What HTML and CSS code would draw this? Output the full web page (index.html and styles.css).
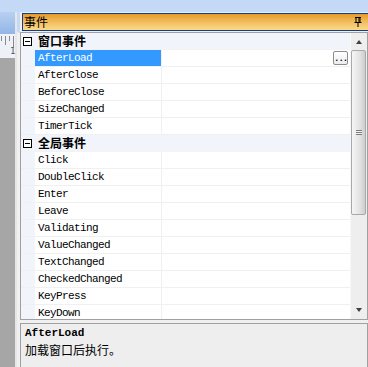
FILE: index.html
```html
<!DOCTYPE html>
<html>
<head>
<meta charset="utf-8">
<link rel="stylesheet" href="styles.css">
</head>
<body>
<div class="screen">
  <div class="topband"></div>
  <div class="main">
    <div class="editor">
      <div class="ed-col">
        <div class="ed-head"></div>
        <div class="ruler">
          <div class="ticks">
            <span class="t1"></span><span class="t2"></span><span class="t1"></span><span class="t3"></span>
          </div>
          <span class="num">1</span>
        </div>
        <div class="ed-body"></div>
      </div>
      <div class="ed-edge"></div>
      <div class="ed-gap"></div>
    </div>
    <div class="panel">
      <div class="titlebar">
        <span class="title">事件</span>
        <svg class="pin" width="8" height="10" viewBox="0 0 8 10">
          <path d="M1 0.5H7M2 0.5V5.5M5 0.5V5.5M6 0.5V5.5M0.5 5.5H7.5M4 5.5V10" stroke="#000" stroke-width="1" fill="none"/>
        </svg>
      </div>
      <div class="grid">
        <div class="rows">
          <div class="cat"><span class="toggle"></span><span class="cat-name">窗口事件</span></div>
          <div class="row sel"><span class="gut"></span><span class="name">AfterLoad</span><span class="val"><span class="dots">...</span></span></div>
          <div class="row"><span class="gut"></span><span class="name">AfterClose</span><span class="val"></span></div>
          <div class="row"><span class="gut"></span><span class="name">BeforeClose</span><span class="val"></span></div>
          <div class="row"><span class="gut"></span><span class="name">SizeChanged</span><span class="val"></span></div>
          <div class="row"><span class="gut"></span><span class="name">TimerTick</span><span class="val"></span></div>
          <div class="cat"><span class="toggle"></span><span class="cat-name">全局事件</span></div>
          <div class="row"><span class="gut"></span><span class="name">Click</span><span class="val"></span></div>
          <div class="row"><span class="gut"></span><span class="name">DoubleClick</span><span class="val"></span></div>
          <div class="row"><span class="gut"></span><span class="name">Enter</span><span class="val"></span></div>
          <div class="row"><span class="gut"></span><span class="name">Leave</span><span class="val"></span></div>
          <div class="row"><span class="gut"></span><span class="name">Validating</span><span class="val"></span></div>
          <div class="row"><span class="gut"></span><span class="name">ValueChanged</span><span class="val"></span></div>
          <div class="row"><span class="gut"></span><span class="name">TextChanged</span><span class="val"></span></div>
          <div class="row"><span class="gut"></span><span class="name">CheckedChanged</span><span class="val"></span></div>
          <div class="row"><span class="gut"></span><span class="name">KeyPress</span><span class="val"></span></div>
          <div class="row"><span class="gut"></span><span class="name">KeyDown</span><span class="val"></span></div>
        </div>
        <div class="scrollbar">
          <div class="arrow up"></div>
          <div class="thumb"><span class="grip"></span></div>
          <div class="track"></div>
          <div class="arrow down"></div>
        </div>
      </div>
      <div class="desc">
        <div class="desc-title">AfterLoad</div>
        <div class="desc-text">加载窗口后执行。</div>
      </div>
    </div>
  </div>
</div>
</body>
</html>
```

FILE: styles.css
```css
html, body {
  margin: 0;
  padding: 0;
}
body {
  width: 368px;
  height: 367px;
  overflow: hidden;
  background: #f0f0f0;
}
.screen {
  width: 368px;
  height: 367px;
  display: flex;
  flex-direction: column;
}
.topband {
  height: 12px;
  background: #c4d9f6;
  flex: none;
}
.main {
  flex: 1;
  display: flex;
  min-height: 0;
}
.editor {
  width: 20px;
  flex: none;
  display: flex;
}
.ed-col {
  width: 15px;
  display: flex;
  flex-direction: column;
}
.ed-head {
  height: 22px;
  background: linear-gradient(#b8d0f1, #92b6e6);
}
.ruler {
  height: 24px;
  background: #eef2f8;
  position: relative;
}
.ticks {
  display: flex;
  gap: 3px;
  padding: 2px 0 0 1px;
  align-items: flex-start;
}
.ticks span {
  width: 1px;
  background: #8a8a8a;
}
.t1 { height: 5px; }
.t2 { height: 9px; }
.t3 { height: 12px; }
.num {
  position: absolute;
  left: 10px;
  top: 12px;
  font: 9px "DejaVu Sans Mono", monospace;
  color: #555;
}
.ed-body {
  flex: 1;
  background: #a6a6a6;
}
.ed-edge {
  width: 2px;
  background: #e6e6e6;
}
.ed-gap {
  width: 3px;
  background: linear-gradient(#c4d9f6 0, #c4d9f6 20px, #f0f0f0 21px);
}
.panel {
  flex: 1;
  display: flex;
  flex-direction: column;
  min-width: 0;
}
.titlebar {
  margin: 1px 0 0 2px;
  height: 16px;
  border: 1px solid #0b3c9e;
  border-right: none;
  background: linear-gradient(#e69a28, #f3c46a 60%, #fbd985);
  display: flex;
  align-items: center;
  justify-content: space-between;
  padding: 0 0 0 1px;
}
.title {
  font: 12px "Noto Sans CJK SC", sans-serif;
  color: #000;
  line-height: 16px;
}
.pin {
  margin-right: 6px;
  display: block;
}
.grid {
  margin-top: 1px;
  height: 286px;
  border: 1px solid #a0a0a0;
  display: flex;
  background: #fff;
  overflow: hidden;
}
.rows {
  flex: 1;
  display: flex;
  flex-direction: column;
  min-width: 0;
}
.cat {
  flex: none;
  height: 16px;
  border-bottom: 1px solid #f3f3f3;
  background: #f1f5fb;
  display: flex;
  align-items: center;
}
.toggle {
  width: 7px;
  height: 7px;
  border: 1px solid #000;
  margin: 0 6px 0 2px;
  position: relative;
  background: #fff;
}
.toggle::after {
  content: "";
  position: absolute;
  left: 1px;
  right: 1px;
  top: 3px;
  height: 1px;
  background: #000;
}
.cat-name {
  font: bold 12px "Noto Sans CJK SC", sans-serif;
  line-height: 16px;
  color: #000;
}
.row {
  flex: none;
  height: 16px;
  border-bottom: 1px solid #f0f0f0;
  display: flex;
}
.gut {
  width: 14px;
  flex: none;
  background: #f1f5fb;
}
.name {
  width: 123px;
  flex: none;
  padding-left: 3px;
  border-right: 1px solid #f0f0f0;
  font: 11px "Liberation Mono", monospace;
  letter-spacing: -0.6px;
  line-height: 16px;
  color: #000;
  white-space: nowrap;
}
.sel .name {
  background: #3399ff;
  color: #fff;
}
.val {
  flex: 1;
  display: flex;
  justify-content: flex-end;
  align-items: center;
  padding-right: 2px;
}
.dots {
  width: 13px;
  height: 12px;
  border: 1px solid #8d8d8d;
  border-radius: 2px;
  background: linear-gradient(#ffffff, #ececec);
  font: bold 9px "Liberation Mono", monospace;
  line-height: 14px;
  text-align: center;
  letter-spacing: -1px;
  color: #000;
}
.scrollbar {
  width: 16px;
  flex: none;
  display: flex;
  flex-direction: column;
  background: #eeeeee;
  border-left: 1px solid #f8f8f8;
}
.arrow {
  height: 17px;
  flex: none;
  position: relative;
}
.arrow::after {
  content: "";
  position: absolute;
  left: 5px;
  width: 0;
  height: 0;
  border-left: 3px solid transparent;
  border-right: 3px solid transparent;
}
.up::after {
  top: 7px;
  border-bottom: 4px solid #404040;
}
.down::after {
  top: 6px;
  border-top: 4px solid #404040;
}
.thumb {
  height: 165px;
  flex: none;
  margin: 0 1px 0 0;
  border: 1px solid #a9a9a9;
  border-radius: 2px;
  box-sizing: border-box;
  background: linear-gradient(90deg, #f6f6f6, #e2e2e2 60%, #cdcdcd);
  display: flex;
  align-items: center;
  justify-content: center;
}
.grip {
  width: 6px;
  height: 5px;
  background: repeating-linear-gradient(#7a7a7a 0, #7a7a7a 1px, #f4f4f4 1px, #f4f4f4 2px);
}
.track {
  flex: 1;
}
.desc {
  margin-top: 3px;
  flex: 1;
  border: 1px solid #a0a0a0;
  border-bottom: none;
  background: #eeeeee;
  padding: 2px 0 0 4px;
}
.desc-title {
  font: bold 11px "Liberation Mono", monospace;
  line-height: 14px;
  color: #000;
}
.desc-text {
  font: 12px "Noto Sans CJK SC", sans-serif;
  line-height: 19px;
  color: #000;
}
```
